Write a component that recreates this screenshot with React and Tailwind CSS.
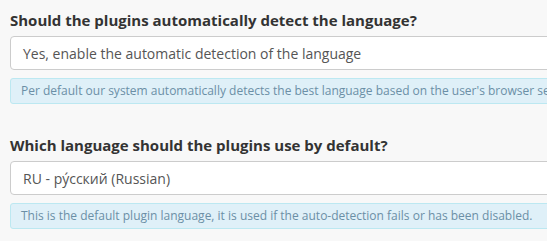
const Field = ({ title, value, help }) => {
  return (
    <div>
      <h3 className="text-[15px] font-bold leading-[22px] text-[#333333]">{title}</h3>
      <div className="mt-[5px] w-[600px] h-[34px] rounded-[4px] border border-[#cccccc] bg-white pl-[12px] flex items-center text-[14px] text-[#555555]">
        {value}
      </div>
      <div className="mt-[8px] w-[600px] h-[26px] rounded-[3px] border border-[#bce8f1] bg-[#dff0f8] pl-[10px] flex items-center text-[12px] text-[#6b8fa6] whitespace-nowrap">
        {help}
      </div>
    </div>
  )
}

export default function App() {
  return (
    <div
      className="w-[547px] h-[241px] overflow-hidden bg-[#f8f8f8] pl-[10px] pt-[9px] flex flex-col gap-[30px]"
      style={{ fontFamily: '"Open Sans", sans-serif' }}
    >
      <Field
        title="Should the plugins automatically detect the language?"
        value="Yes, enable the automatic detection of the language"
        help="Per default our system automatically detects the best language based on the user's browser settings."
      />
      <Field
        title="Which language should the plugins use by default?"
        value="RU - ру́сский (Russian)"
        help="This is the default plugin language, it is used if the auto-detection fails or has been disabled."
      />
    </div>
  )
}
